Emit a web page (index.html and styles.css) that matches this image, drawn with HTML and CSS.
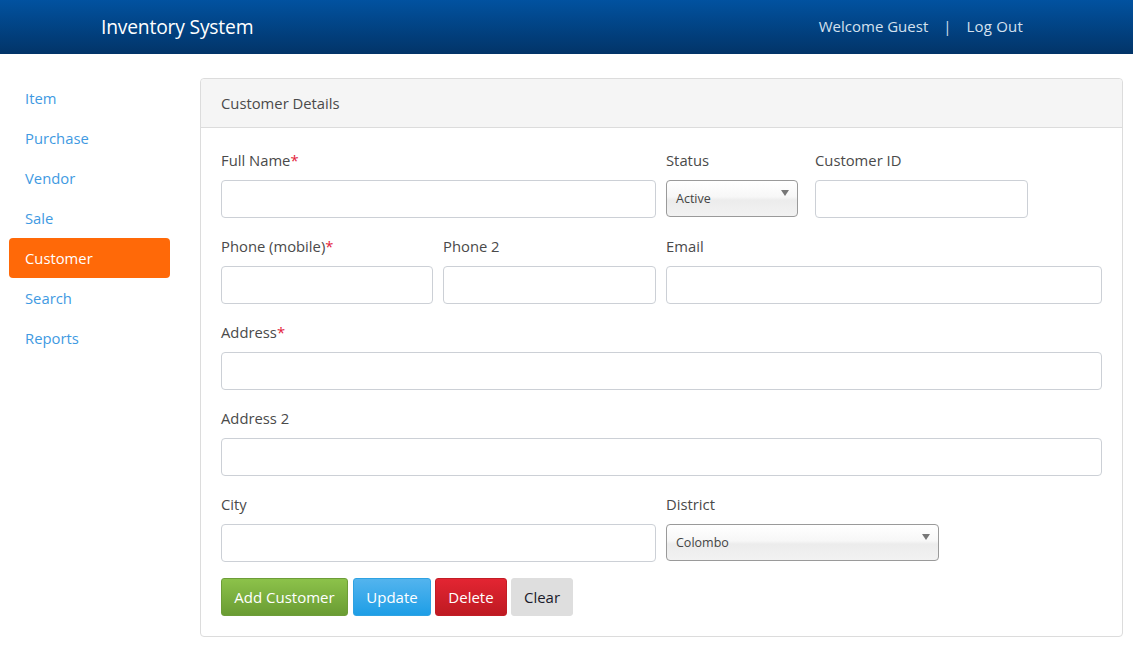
FILE: index.html
```html
<!DOCTYPE html>
<html>
<head>
<meta charset="utf-8">
<link rel="stylesheet" href="styles.css">
</head>
<body>
<header class="topbar">
  <div class="brand">Inventory System</div>
  <nav class="user-nav">
    <span class="welcome">Welcome Guest</span>
    <span class="sep">|</span>
    <a class="logout" href="#">Log Out</a>
  </nav>
</header>
<div class="layout">
  <aside class="sidebar">
    <a class="nav-item" href="#">Item</a>
    <a class="nav-item" href="#">Purchase</a>
    <a class="nav-item" href="#">Vendor</a>
    <a class="nav-item" href="#">Sale</a>
    <a class="nav-item active" href="#">Customer</a>
    <a class="nav-item" href="#">Search</a>
    <a class="nav-item" href="#">Reports</a>
  </aside>
  <main class="panel">
    <div class="panel-head">Customer Details</div>
    <div class="panel-body">
      <div class="row row-1">
        <div class="field"><label>Full Name<span class="req">*</span></label><input class="input" type="text"></div>
        <div class="field"><label>Status</label><div class="select">Active<span class="caret"></span></div></div>
        <div class="field field-id"><label>Customer ID</label><input class="input" type="text"></div>
      </div>
      <div class="row row-2">
        <div class="field"><label>Phone (mobile)<span class="req">*</span></label><input class="input" type="text"></div>
        <div class="field"><label>Phone 2</label><input class="input" type="text"></div>
        <div class="field"><label>Email</label><input class="input" type="text"></div>
      </div>
      <div class="row row-full">
        <div class="field"><label>Address<span class="req">*</span></label><input class="input" type="text"></div>
      </div>
      <div class="row row-full">
        <div class="field"><label>Address 2</label><input class="input" type="text"></div>
      </div>
      <div class="row row-5">
        <div class="field"><label>City</label><input class="input" type="text"></div>
        <div class="field"><label>District</label><div class="select select-wide">Colombo<span class="caret"></span></div></div>
      </div>
      <div class="actions">
        <button class="btn btn-green">Add Customer</button>
        <button class="btn btn-blue">Update</button>
        <button class="btn btn-red">Delete</button>
        <button class="btn btn-grey">Clear</button>
      </div>
    </div>
  </main>
</div>
</body>
</html>
```
FILE: styles.css
```css
* { box-sizing: border-box; }
html, body { margin: 0; padding: 0; }
body {
  font-family: "Open Sans", "Noto Sans", sans-serif;
  font-size: 14.8px;
  color: #444;
  background: #fff;
  width: 1133px;
  height: 666px;
  overflow: hidden;
}
.topbar {
  height: 54px;
  background: linear-gradient(to bottom, #0152a0 0%, #023468 100%);
  display: flex;
  align-items: center;
  justify-content: space-between;
  padding: 0 110px 2px 101px;
}
.brand {
  color: #fff;
  font-size: 19.3px;
  letter-spacing: -0.2px;
}
.user-nav {
  display: flex;
  align-items: center;
  color: #d4e0ee;
  font-size: 15px;
}
.user-nav .sep { margin: 0 15px 0 15px; }
.user-nav .logout { color: #d4e0ee; text-decoration: none; letter-spacing: 0.2px; }
.layout {
  display: flex;
  align-items: flex-start;
  padding: 24px 10px 0 9px;
  gap: 30px;
}
.sidebar {
  width: 161px;
  display: flex;
  flex-direction: column;
}
.nav-item {
  display: block;
  height: 40px;
  line-height: 40px;
  padding-left: 16px;
  color: #3f9ae2;
  text-decoration: none;
  border-radius: 4px;
}
.nav-item.active {
  background: #ff6908;
  color: #fff;
}
.panel {
  flex: 1;
  border: 1px solid #dcdcdc;
  border-radius: 4px;
  background: #fff;
}
.panel-head {
  background: #f5f5f5;
  border-bottom: 1px solid #dcdcdc;
  height: 49px;
  line-height: 48px;
  padding-left: 20px;
  color: #4a4a4a;
  border-radius: 4px 4px 0 0;
}
.panel-body {
  padding: 22px 20px 20px 20px;
}
.row {
  display: grid;
  column-gap: 10px;
  margin-bottom: 18px;
}
.row-1 { grid-template-columns: 435px 132px 220px; }
.field-id { margin-left: 7px; }
.row-2 { grid-template-columns: 212px 213px 436px; }
.row-full { grid-template-columns: 1fr; }
.row-5 { grid-template-columns: 435px 273px; }
.field { display: flex; flex-direction: column; }
.field label {
  display: block;
  height: 20px;
  line-height: 20px;
  margin-bottom: 10px;
  color: #4a4a4a;
}
.req { color: #e3213b; }
.input {
  height: 38px;
  width: 100%;
  border: 1px solid #ccd0d6;
  border-radius: 4px;
  background: #fff;
  font: inherit;
}
.select {
  position: relative;
  height: 37px;
  border: 1px solid #9a9a9a;
  border-radius: 4px;
  background: linear-gradient(to bottom, #ffffff 0%, #f7f7f7 45%, #ececec 55%, #f2f2f2 100%);
  font-size: 12.5px;
  color: #444;
  padding: 9px 0 0 9px;
  box-shadow: inset 0 1px 0 #fff;
}
.caret {
  position: absolute;
  right: 8px;
  top: 9px;
  width: 0;
  height: 0;
  border-left: 4px solid transparent;
  border-right: 4px solid transparent;
  border-top: 6px solid #777;
}
.actions {
  display: flex;
  gap: 4px;
  margin-top: -2px;
}
.btn {
  height: 38px;
  border: 1px solid transparent;
  border-radius: 3px;
  font: inherit;
  font-size: 15px;
  color: #fff;
  padding: 0 10px;
  cursor: pointer;
}
.btn-green { background: linear-gradient(to bottom, #8cc24a, #6a9c33); border-color: #6d9d38; width: 127px; margin-right: 1px; }
.btn-blue { background: linear-gradient(to bottom, #53b4ee, #1e9ee6); border-color: #2ea2e2; width: 78px; }
.btn-red { background: linear-gradient(to bottom, #e32532, #be1a22); border-color: #c21d25; width: 72px; }
.btn-grey { background: #dedede; border-color: #dedede; color: #1a1a2a; width: 62px; }
```
